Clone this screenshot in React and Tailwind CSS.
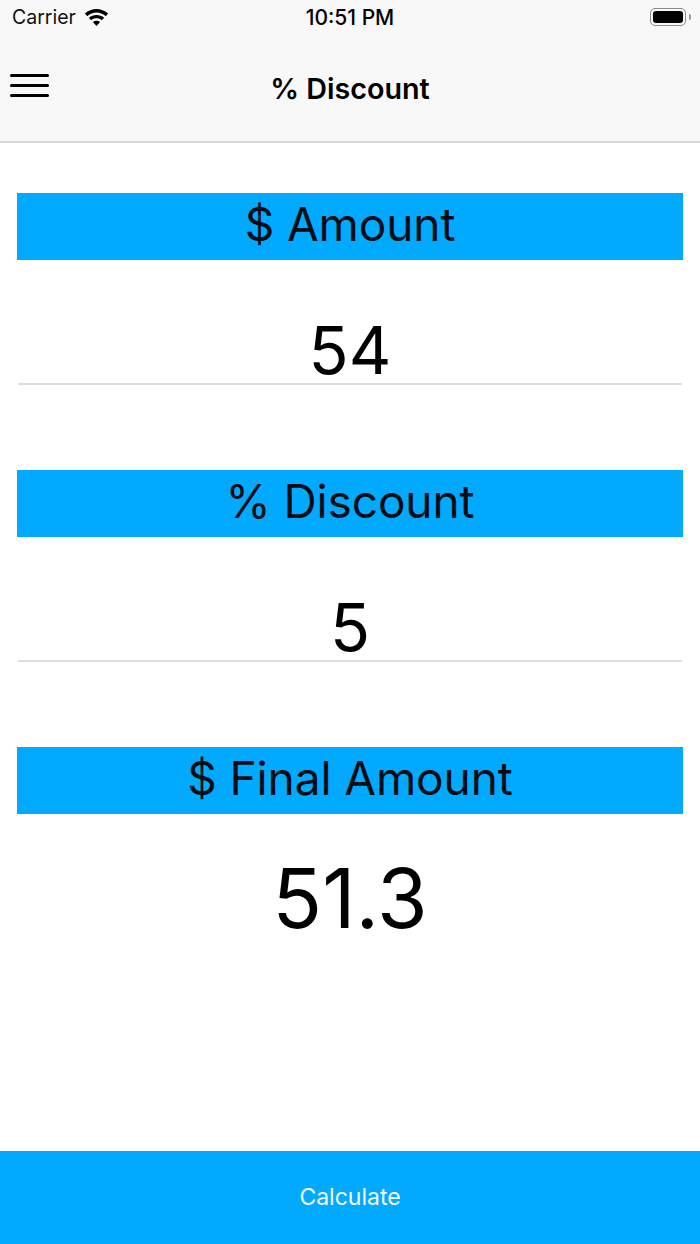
const font = "font-['Inter','Liberation_Sans',sans-serif]";

function Wifi() {
  return (
    <svg width="25" height="18" viewBox="0 0 26 19" className="ml-[8px] mt-[-3px]">
      <path d="M13 19 L9.2 14.9 C11.4 13 14.6 13 16.8 14.9 Z" fill="#000" />
      <path d="M7.4 13 L4.9 10.3 C9.6 6.3 16.4 6.3 21.1 10.3 L18.6 13 C15.3 10.2 10.7 10.2 7.4 13 Z" fill="#000" />
      <path d="M3.3 8.6 L0.7 5.8 C7.8 -0.6 18.2 -0.6 25.3 5.8 L22.7 8.6 C17 3.5 9 3.5 3.3 8.6 Z" fill="#000" />
    </svg>
  );
}

function Battery() {
  return (
    <div className="flex items-center mt-[-2px]">
      <div className="w-[36px] h-[18px] rounded-[5px] border-[1.5px] border-[#8a8a8a] p-[2px]">
        <div className="w-full h-full rounded-[3px] bg-black" />
      </div>
      <div className="w-[2px] h-[6px] ml-[3px] rounded-r-[2px] bg-[#9a9a9a]" />
    </div>
  );
}

function Label({ children }) {
  return (
    <div className="h-[67px] bg-[#02aaff] flex items-center justify-center text-[46px] tracking-[-0.1px] leading-none text-[#050d14]">
      <span className="mt-[-6px]">{children}</span>
    </div>
  );
}

function Field({ value }) {
  return (
    <div className="mt-[51px] mx-[1px] h-[74px] border-b-2 border-[#dddddd] flex items-center justify-center text-[66px] leading-none text-black">
      <span className="mt-[5px]">{value}</span>
    </div>
  );
}

export default function App() {
  return (
    <div className={`w-[700px] h-[1244px] bg-white flex flex-col overflow-hidden ${font}`}>
      <header className="h-[143px] shrink-0 bg-[#f8f8f8] border-b-2 border-[#d8d8d8] flex flex-col">
        <div className="h-[36px] flex items-center justify-between pl-[12px] pr-[9px] text-black relative">
          <div className="flex items-center">
            <span className="text-[19.5px] font-normal text-[#111]">Carrier</span>
            <Wifi />
          </div>
          <span className="absolute left-0 right-0 text-center text-[21px] font-medium">10:51 PM</span>
          <Battery />
        </div>
        <div className="flex-1 flex items-center justify-center relative">
          <div className="absolute left-[10px] top-[38px] w-[39px] flex flex-col gap-[7px]">
            <div className="h-[3px] rounded-full bg-black" />
            <div className="h-[3px] rounded-full bg-black" />
            <div className="h-[3px] rounded-full bg-black" />
          </div>
          <h1 className="text-[28.7px] font-semibold text-black">% Discount</h1>
        </div>
      </header>
      <main className="flex-1 px-[17px] pt-[50px] flex flex-col">
        <Label>$ Amount</Label>
        <Field value="54" />
        <div className="h-[85px]" />
        <Label>% Discount</Label>
        <Field value="5" />
        <div className="h-[85px]" />
        <Label>$ Final Amount</Label>
        <div className="h-[170px] flex items-center justify-center text-[82px] leading-none text-black">51.3</div>
      </main>
      <button className="h-[93px] shrink-0 bg-[#02aaff] text-[#f4fbff] text-[23px] font-normal">Calculate</button>
    </div>
  );
}
